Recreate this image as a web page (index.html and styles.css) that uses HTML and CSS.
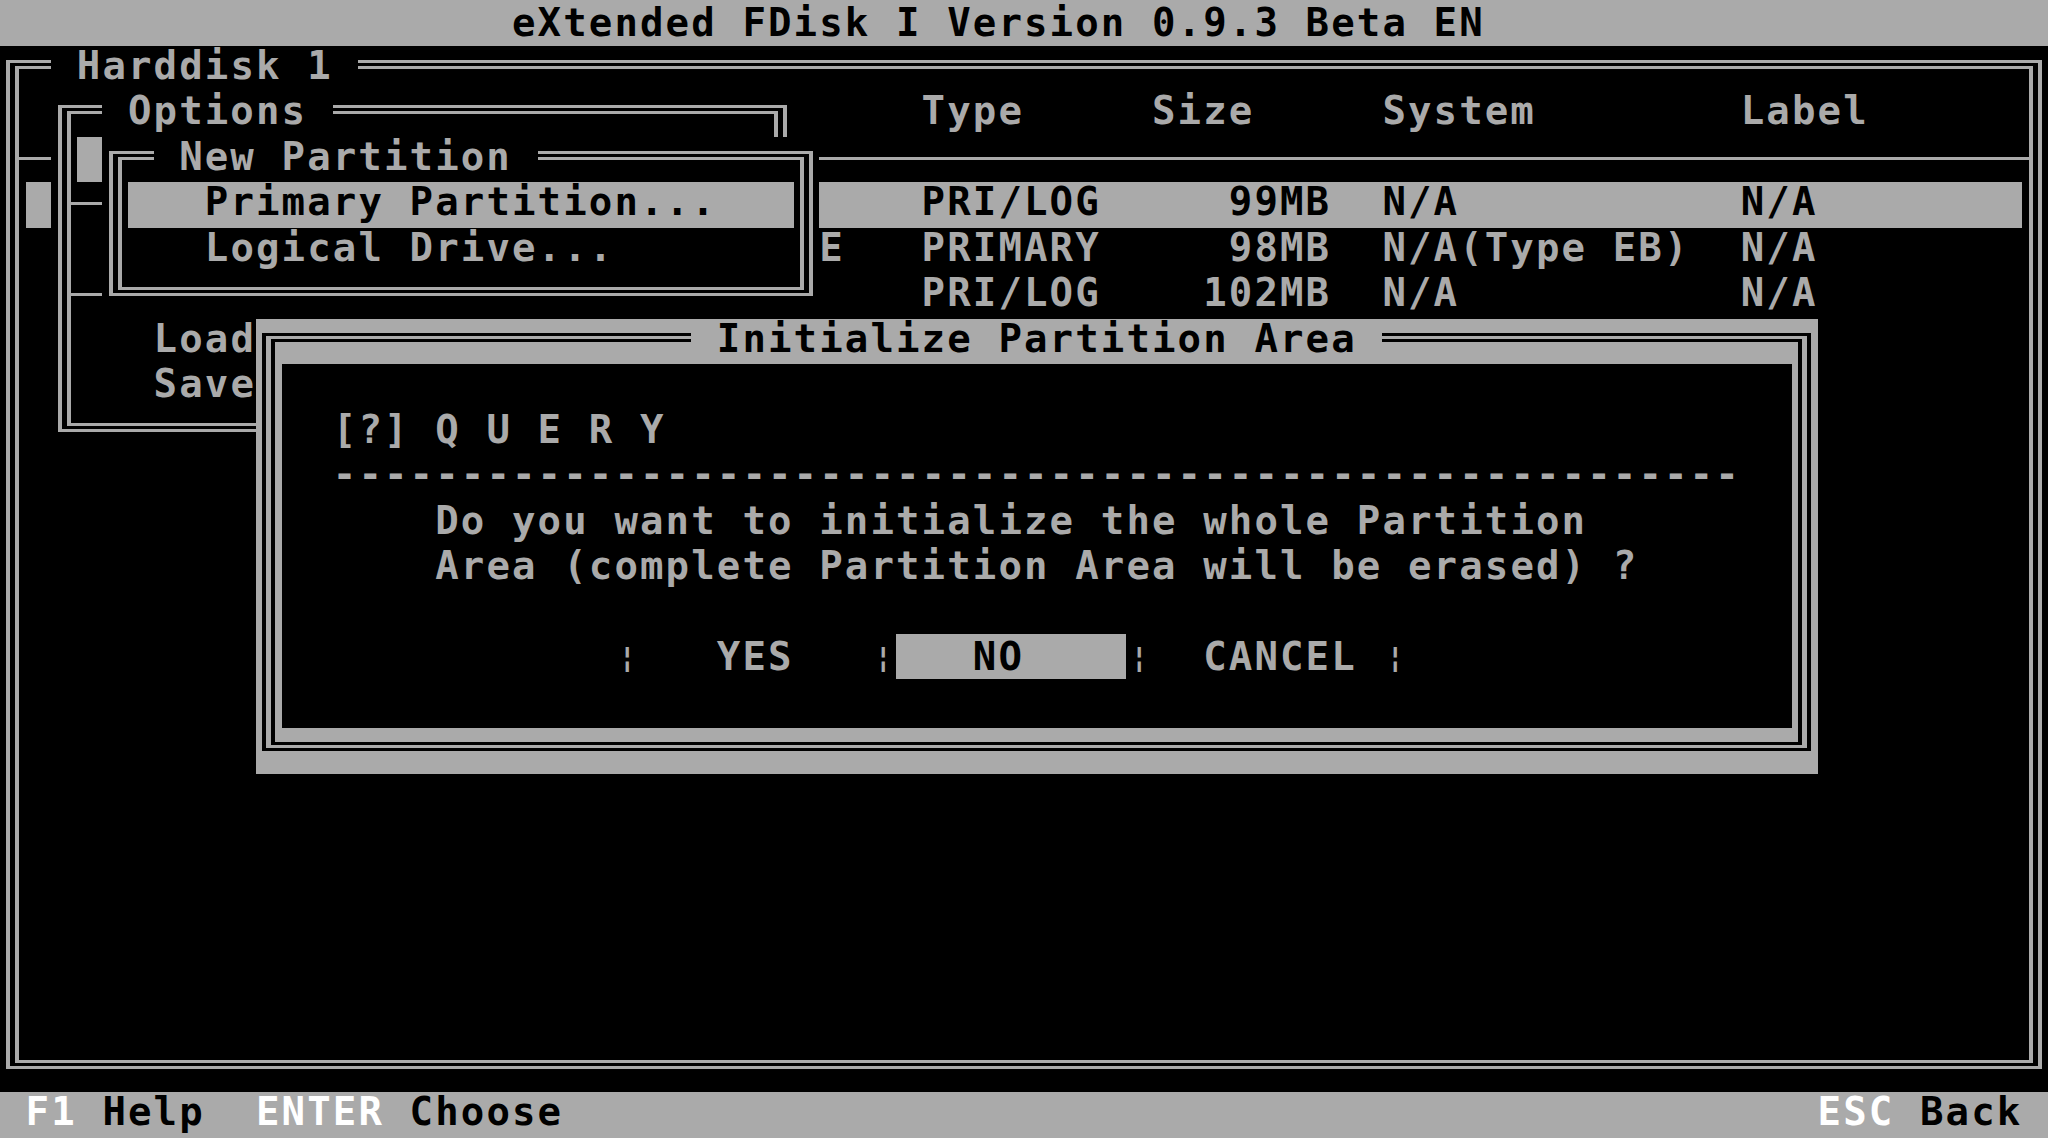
FILE: index.html
```html
<!DOCTYPE html>
<html lang="en">
<head>
  <meta charset="UTF-8" />
  <title>eXtended FDisk</title>
  <link rel="stylesheet" href="styles.css">
</head>
<body>
  <div class="screen">
    <div class="ln bar title">eXtended FDisk I Version 0.9.3 Beta EN</div>

    <div class="desk">
      <!-- harddisk window (background) -->
      <section class="win disk">
        <div class="frame"></div>
        <div class="ln"><span class="cap">Harddisk 1</span></div>
        <div class="ln part">
          <span></span><span>Type</span><span>Size</span><span>System</span><span>Label</span>
        </div>
        <div class="ln sep"></div>
        <div class="ln part sel">
          <span></span><span>PRI/LOG</span><span class="num">99MB</span><span>N/A</span><span>N/A</span>
        </div>
        <div class="ln part">
          <span class="drv">E</span><span>PRIMARY</span><span class="num">98MB</span><span>N/A(Type EB)</span><span>N/A</span>
        </div>
        <div class="ln part">
          <span></span><span>PRI/LOG</span><span class="num">102MB</span><span>N/A</span><span>N/A</span>
        </div>
      </section>

      <!-- options menu -->
      <section class="win options">
        <div class="frame"></div>
        <div class="ln"><span class="cap">Options</span></div>
        <div class="ln sel"></div>
        <div class="ln sep"></div>
        <div class="ln"></div>
        <div class="ln sep"></div>
        <div class="ln item">Load</div>
        <div class="ln item">Save</div>
      </section>

      <!-- new partition submenu -->
      <section class="win newpart">
        <div class="frame"></div>
        <div class="ln"><span class="cap">New Partition</span></div>
        <div class="ln item sel">Primary Partition...</div>
        <div class="ln item">Logical Drive...</div>
      </section>

      <!-- query dialog -->
      <section class="win query">
        <div class="frame"></div>
        <div class="ln center"><span class="cap">Initialize Partition Area</span></div>
        <div class="panel">
          <div class="ln"></div>
          <div class="ln ind2">[?] Q U E R Y</div>
          <div class="ln ind2 dashes">-------------------------------------------------------</div>
          <div class="ln ind6">Do you want to initialize the whole Partition</div>
          <div class="ln ind6">Area (complete Partition Area will be erased) ?</div>
          <div class="ln"></div>
          <div class="ln buttons"><span class="bb">¦</span>   YES   <span class="bb">¦</span><span class="btn-sel">   NO    </span><span class="bb">¦</span>  CANCEL <span class="bb">¦</span></div>
        </div>
      </section>
    </div>

    <div class="ln bar status">
      <span><span class="key">F1</span> Help  <span class="key">ENTER</span> Choose</span>
      <span><span class="key">ESC</span> Back</span>
    </div>
  </div>
</body>
</html>
```

FILE: styles.css
```css
:root {
  --cw: 25.6px;
  --ch: 45.52px;
  --gray: #aaaaaa;
}
* {
  box-sizing: border-box;
}
body {
  margin: 0;
  background: #000;
}
.screen {
  width: 2048px;
  height: 1138px;
  display: flex;
  flex-direction: column;
  background: #000;
  color: var(--gray);
  font-family: "DejaVu Sans Mono", monospace;
  font-size: 39px;
  font-weight: bold;
  letter-spacing: 2.12px;
  overflow: hidden;
}
.ln {
  position: relative;
  height: var(--ch);
  line-height: 39px;
  white-space: pre;
}
.bar {
  background: var(--gray);
  color: #000;
}
.title {
  line-height: var(--ch);
  padding-left: calc(20 * var(--cw));
}
.status {
  display: flex;
  justify-content: space-between;
  padding: 0 var(--cw);
}
.key {
  color: #fff;
}
.desk {
  position: relative;
  flex: 1;
}

/* windows */
.win {
  position: absolute;
  background: #000;
}
.frame {
  position: absolute;
  left: 6.4px;
  right: 6.4px;
  top: 14px;
  bottom: 23px;
  border: 9px double var(--gray);
  border-left-width: 13px;
  border-right-width: 13px;
}
.cap {
  display: inline-block;
  height: var(--ch);
  margin-left: calc(2 * var(--cw));
  padding: 0 var(--cw);
  background: #000;
}
.center {
  text-align: center;
}
.center .cap {
  margin-left: 0;
}
.sel {
  background: var(--gray);
  color: #000;
  margin: 0 var(--cw);
}
.sep::before {
  content: "";
  position: absolute;
  left: 19px;
  right: 19px;
  top: 20px;
  height: 3px;
  background: var(--gray);
}
.item {
  padding-left: calc(4 * var(--cw));
}
.item.sel {
  padding-left: calc(3 * var(--cw));
}

.disk {
  left: 0;
  top: 0;
  width: calc(80 * var(--cw));
  height: calc(23 * var(--ch));
}
.options {
  left: calc(2 * var(--cw));
  top: var(--ch);
  width: calc(29 * var(--cw));
  height: calc(8 * var(--ch));
}
.newpart {
  left: calc(4 * var(--cw));
  top: calc(2 * var(--ch));
  width: calc(28 * var(--cw));
  height: calc(4 * var(--ch));
}

/* partition table */
.part {
  display: grid;
  grid-template-columns: calc(35 * var(--cw)) calc(9 * var(--cw)) calc(9 * var(--cw)) calc(14 * var(--cw)) calc(11 * var(--cw));
  margin: 0 var(--cw);
}
.num {
  text-align: right;
  padding-right: calc(2 * var(--cw));
}
.drv {
  text-align: right;
  padding-right: calc(3 * var(--cw));
}

/* dialog */
.query {
  left: calc(10 * var(--cw));
  top: calc(6 * var(--ch));
  width: calc(61 * var(--cw));
  height: calc(10 * var(--ch));
  background: var(--gray);
  color: #000;
}
.query .frame {
  border-color: #000;
}
.query .cap {
  background: var(--gray);
}
.panel {
  position: relative;
  margin: 0 var(--cw);
  height: calc(8 * var(--ch));
  background: #000;
  color: var(--gray);
}
.ind2 {
  padding-left: calc(2 * var(--cw));
}
.ind6 {
  padding-left: calc(6 * var(--cw));
}
.buttons {
  padding-left: calc(13 * var(--cw));
}
.bb {
  display: inline-block;
  position: relative;
  top: -3px;
  width: var(--cw);
  text-align: center;
  font-size: 29px;
  letter-spacing: 0;
}
.btn-sel {
  background: var(--gray);
  color: #000;
}
```
